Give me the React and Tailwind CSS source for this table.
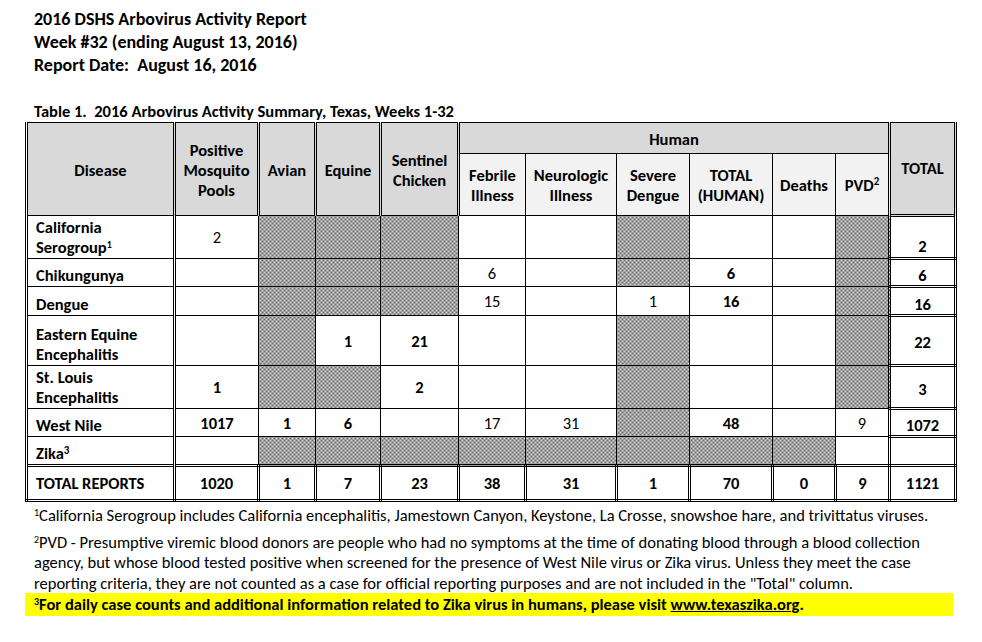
import React from "react";

const H = "H";
const FONT = "font-['Carlito','Lato','Liberation_Sans',sans-serif]";

const hatch =
  "bg-[#b0b0b0] bg-[repeating-conic-gradient(#6a6a6a_0_25%,#d6d6d6_0_50%)] bg-[length:4px_4px]";

const rows = [
  {
    name: (
      <>
        California
        <br />
        Serogroup<sup className="text-[10px]">1</sup>
      </>
    ),
    h: "h-[43px]",
    cells: [["2", 0], H, H, H, "", "", H, "", "", H],
    total: "2",
    totalAlign: "align-bottom pb-[1px]",
  },
  {
    name: "Chikungunya",
    h: "h-[28px]",
    cells: ["", H, H, H, ["6", 0], "", H, ["6", 1], "", H],
    total: "6",
    totalAlign: "align-bottom pb-[0px]",
  },
  {
    name: "Dengue",
    h: "h-[29px]",
    cells: ["", H, H, H, ["15", 0], "", ["1", 0], ["16", 1], "", H],
    total: "16",
    totalAlign: "align-bottom pb-[0px]",
  },
  {
    name: (
      <>
        Eastern Equine
        <br />
        Encephalitis
      </>
    ),
    h: "h-[50px]",
    cells: ["", H, ["1", 1], ["21", 1], "", "", H, "", "", H],
    total: "22",
    totalAlign: "align-middle pt-[3px]",
  },
  {
    name: (
      <>
        St. Louis
        <br />
        Encephalitis
      </>
    ),
    h: "h-[43px]",
    cells: [["1", 1], H, H, ["2", 1], "", "", H, "", "", H],
    total: "3",
    totalAlign: "align-middle pt-[4px]",
  },
  {
    name: "West Nile",
    h: "h-[28px]",
    cells: [["1017", 1], ["1", 1], ["6", 1], "", ["17", 0], ["31", 0], H, ["48", 1], "", ["9", 0]],
    total: "1072",
    totalAlign: "align-middle pt-[4px]",
  },
  {
    name: (
      <>
        Zika<sup className="text-[11px]">3</sup>
      </>
    ),
    h: "h-[29px]",
    cells: ["", H, H, H, H, H, H, H, H, ""],
    total: "",
    totalAlign: "",
  },
];

const totals = ["1020", "1", "7", "23", "38", "31", "1", "70", "0", "9"];

const dbl = {
  r: "border-r-[3px] [border-right-style:double]",
  l: "border-l-[3px] [border-left-style:double]",
  t: "border-t-[3px] [border-top-style:double]",
  b: "border-b-[3px] [border-bottom-style:double]",
};

export default function App() {
  return (
    <div className={`${FONT} bg-white text-black w-[982px] h-[642px] overflow-hidden`}>
      <div className="pl-[34px] pt-[8px] text-[18px] font-bold leading-[23px]">
        <div>2016 DSHS Arbovirus Activity Report</div>
        <div>Week #32 (ending August 13, 2016)</div>
        <div>Report Date:&nbsp; August 16, 2016</div>
      </div>
      <div className="pl-[34px] pt-[26px] text-[16.5px] font-bold leading-[17px]">
        Table 1.&nbsp; 2016 Arbovirus Activity Summary, Texas, Weeks 1-32
      </div>
      <div className="pl-[25px] pt-[2px]">
        <table className="border-collapse table-fixed w-[929px] text-[16.5px] leading-[20px]">
          <colgroup>
            <col className="w-[148px]" />
            <col className="w-[84px]" />
            <col className="w-[57px]" />
            <col className="w-[65px]" />
            <col className="w-[78px]" />
            <col className="w-[67px]" />
            <col className="w-[91px]" />
            <col className="w-[73px]" />
            <col className="w-[83px]" />
            <col className="w-[63px]" />
            <col className="w-[54px]" />
            <col className="w-[66px]" />
          </colgroup>
          <thead>
            <tr className="h-[31px] font-bold">
              <th rowSpan={2} className={`border border-black bg-[#d9d9d9] ${dbl.l} ${dbl.r} font-bold pt-[2px]`}>Disease</th>
              <th rowSpan={2} className={`border border-black bg-[#d9d9d9] ${dbl.r} font-bold pt-[2px]`}>
                Positive
                <br />
                Mosquito
                <br />
                Pools
              </th>
              <th rowSpan={2} className={`border border-black bg-[#d9d9d9] ${dbl.r} font-bold pt-[2px]`}>Avian</th>
              <th rowSpan={2} className={`border border-black bg-[#d9d9d9] ${dbl.r} font-bold pt-[2px]`}>Equine</th>
              <th rowSpan={2} className={`border border-black bg-[#d9d9d9] ${dbl.r} font-bold pt-[2px]`}>
                Sentinel
                <br />
                Chicken
              </th>
              <th colSpan={6} className="border border-black bg-[#d9d9d9] font-bold pt-[1px]">Human</th>
              <th rowSpan={2} className={`border border-black bg-[#d9d9d9] ${dbl.l} ${dbl.r} font-bold align-middle pb-[2px]`}>TOTAL</th>
            </tr>
            <tr className="h-[62px]">
              <th className="border border-black bg-[#f2f2f2] font-bold">
                Febrile
                <br />
                Illness
              </th>
              <th className="border border-black bg-[#f2f2f2] font-bold">
                Neurologic
                <br />
                Illness
              </th>
              <th className="border border-black bg-[#f2f2f2] font-bold">
                Severe
                <br />
                Dengue
              </th>
              <th className="border border-black bg-[#f2f2f2] font-bold">
                TOTAL
                <br />
                (HUMAN)
              </th>
              <th className="border border-black bg-[#f2f2f2] font-bold">Deaths</th>
              <th className="border border-black bg-[#f2f2f2] font-bold">
                PVD<sup className="text-[11px]">2</sup>
              </th>
            </tr>
          </thead>
          <tbody>
            {rows.map((r, i) => (
              <tr key={i} className={r.h}>
                <td className={`border border-black ${dbl.l} ${dbl.r} pl-[8px] pr-[2px] align-bottom pb-[1px] font-bold leading-[20px]`}>
                  {r.name}
                </td>
                {r.cells.map((c, j) => {
                  if (c === H) {
                    return <td key={j} className={`border border-black ${hatch}`}></td>;
                  }
                  const text = Array.isArray(c) ? c[0] : c;
                  const bold = Array.isArray(c) && c[1] === 1;
                  return (
                    <td key={j} className={`border border-black text-center align-middle ${bold ? "font-bold" : "font-normal"}`}>
                      {text}
                    </td>
                  );
                })}
                <td className={`border border-black ${dbl.l} ${dbl.r} ${dbl.t} ${dbl.b} text-center font-bold ${r.totalAlign}`}>
                  {r.total}
                </td>
              </tr>
            ))}
            <tr className="h-[35px] font-bold">
              <td className={`border border-black ${dbl.l} ${dbl.r} ${dbl.t} ${dbl.b} pl-[8px] text-left`}>TOTAL REPORTS</td>
              {totals.map((t, j) => (
                <td key={j} className={`border border-black ${dbl.l} ${dbl.r} ${dbl.t} ${dbl.b} text-center`}>
                  {t}
                </td>
              ))}
              <td className={`border border-black ${dbl.l} ${dbl.r} ${dbl.t} ${dbl.b} text-center`}>1121</td>
            </tr>
          </tbody>
        </table>
      </div>
      <div className="pl-[34px] pt-[3px] text-[16.5px] leading-[20.5px]">
        <p className="w-[900px]">
          <sup className="text-[10px]">1</sup>California Serogroup includes California encephalitis, Jamestown Canyon, Keystone, La Crosse, snowshoe hare, and trivittatus viruses.
        </p>
        <p className="mt-[6px] w-[898px]">
          <sup className="text-[10px]">2</sup>PVD - Presumptive viremic blood donors are people who had no symptoms at the time of donating blood through a blood collection agency, but whose blood tested positive when screened for the presence of West Nile virus or Zika virus. Unless they meet the case reporting criteria, they are not counted as a case for official reporting purposes and are not included in the "Total" column.
        </p>
      </div>
      <div className="ml-[25px] mt-[0px] w-[928px] bg-[#ffff00] pl-[9px] text-[16.5px] font-bold leading-[23px]">
        <sup className="text-[10px]">3</sup>For daily case counts and additional information related to Zika virus in humans, please visit <span className="underline">www.texaszika.org</span>.
      </div>
    </div>
  );
}
